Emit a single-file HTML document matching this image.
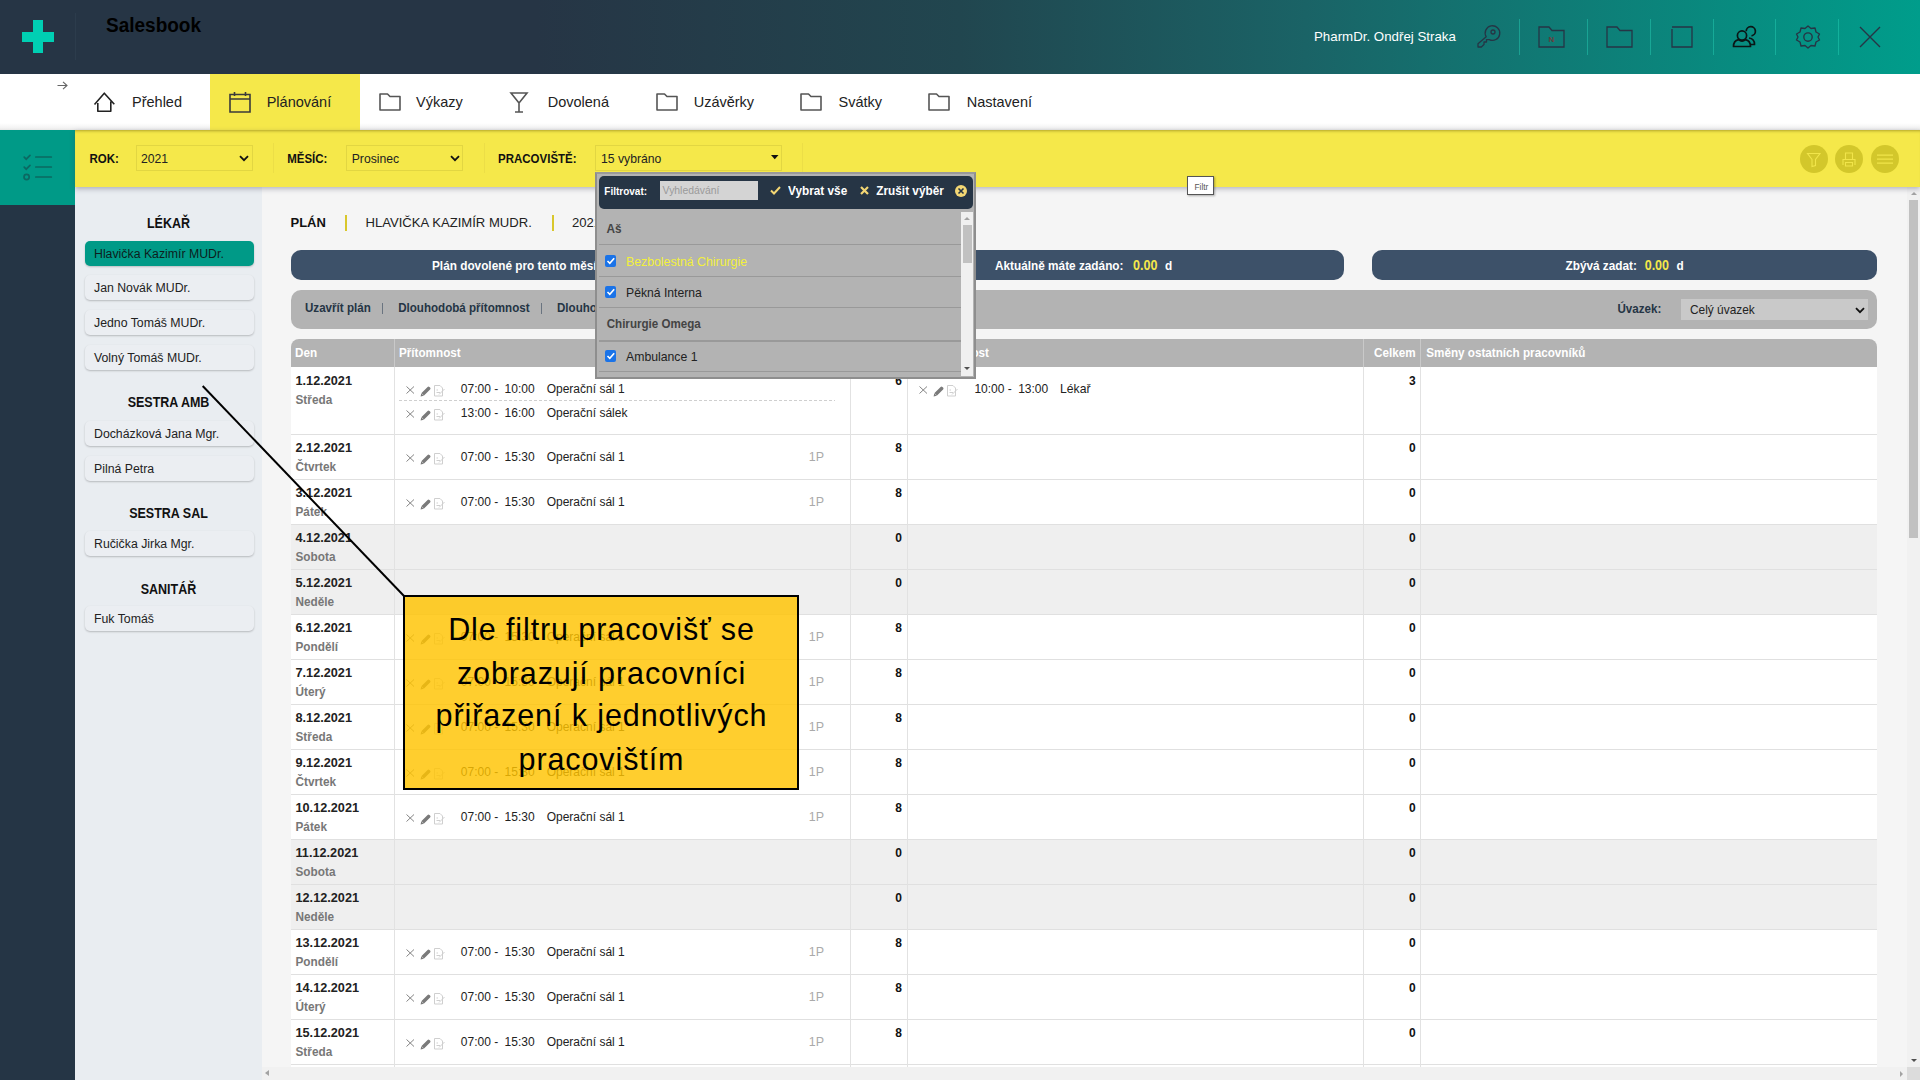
<!DOCTYPE html>
<html><head><meta charset="utf-8">
<style>
*{box-sizing:border-box;margin:0;padding:0}
html,body{width:1920px;height:1080px;overflow:hidden;font-family:"Liberation Sans",sans-serif;background:#f5f5f5;color:#222;position:relative}
.abs{position:absolute}
.t{position:absolute;white-space:pre}
svg{overflow:visible}
</style></head><body>

<div class="abs" style="left:0px;top:0px;width:1920px;height:74px;background:linear-gradient(90deg,#263545 0%,#263545 28%,#21464f 50%,#1a6366 68%,#009d8b 100%)"></div>
<div class="abs" style="left:33px;top:20px;width:10px;height:33px;background:#00cfb3"></div>
<div class="abs" style="left:21.5px;top:32px;width:32.5px;height:9.5px;background:#00cfb3"></div>
<div class="abs" style="left:75px;top:13px;width:1px;height:47px;background:#2c3c4c"></div>
<div class="t" style="left:106.00px;top:15px;font-size:19px;line-height:21px;font-weight:700;color:#000;transform:scaleY(1.1);transform-origin:0 17px">Salesbook</div>
<div class="t" style="left:1314.00px;top:29px;font-size:13.3px;line-height:15px;font-weight:400;color:#fff;">PharmDr. Ondřej Straka</div>
<div class="abs" style="left:1519.0px;top:19px;width:1.0px;height:36px;background:rgba(40,210,185,.45)"></div>
<div class="abs" style="left:1586.5px;top:19px;width:1.0px;height:36px;background:rgba(40,210,185,.45)"></div>
<div class="abs" style="left:1649.5px;top:19px;width:1.0px;height:36px;background:rgba(40,210,185,.45)"></div>
<div class="abs" style="left:1712.5px;top:19px;width:1.0px;height:36px;background:rgba(40,210,185,.45)"></div>
<div class="abs" style="left:1774.5px;top:19px;width:1.0px;height:36px;background:rgba(40,210,185,.45)"></div>
<div class="abs" style="left:1837.5px;top:19px;width:1.0px;height:36px;background:rgba(40,210,185,.45)"></div>
<svg class="abs" style="left:1477px;top:25px;" width="24" height="23" viewBox="0 0 24 23"><g fill="none" stroke="#263545" stroke-width="1.3" stroke-linejoin="round" stroke-linecap="round"><path d="M9.2 11.8 A7.3 7.3 0 1 1 12.2 14.6 L9.5 14.6 L9.5 17 L7 17 L7 19.5 L4.3 22 L1 22 L1 18.7 Z"/><circle cx="16" cy="7" r="2"/></g></svg>
<svg class="abs" style="left:1538px;top:26px;" width="27" height="22" viewBox="0 0 27 22"><g fill="none" stroke="#263545" stroke-width="1.3"><path d="M1 1 H11 L14 4.5 H26 V21 H1 Z"/></g><text x="13.5" y="16" font-family="Liberation Sans" font-size="8" font-weight="700" fill="#6a3b3b" text-anchor="middle">N</text></svg>
<svg class="abs" style="left:1606px;top:26px;" width="27" height="22" viewBox="0 0 27 22"><g fill="none" stroke="#263545" stroke-width="1.3"><path d="M1 1 H11 L14 4.5 H26 V21 H1 Z"/></g></svg>
<svg class="abs" style="left:1671px;top:26px;" width="22" height="22" viewBox="0 0 22 22"><g fill="none" stroke="#263545" stroke-width="1.3"><path d="M1 1 H21 V21 H1 V3"/></g></svg>
<svg class="abs" style="left:1732px;top:25px;" width="24" height="24" viewBox="0 0 24 24"><g fill="none" stroke="#0b1616" stroke-width="1.7" stroke-linejoin="round"><path d="M14.2 6.2 A4.6 4.6 0 1 1 19.5 10.8"/><circle cx="10" cy="10.5" r="4.6"/><path d="M1.5 21.5 C1.5 17.5 3.5 15.3 6.5 14.6 C8.5 16.2 11.5 16.2 13.5 14.6 C16.5 15.3 18.5 17.5 18.5 21.5 Z"/><path d="M17 13 C20 13.3 22.5 15.5 22.5 19.5 L19 19.5"/></g></svg>
<svg class="abs" style="left:1795px;top:25px;" width="26" height="24" viewBox="0 0 26 24"><g fill="none" stroke="#263545" stroke-width="1.35" stroke-linejoin="round"><path d="M13 1 L16 3.5 L20 3 L21 7 L24.5 9 L23 12 L24.5 15 L21 17 L20 21 L16 20.5 L13 23 L10 20.5 L6 21 L5 17 L1.5 15 L3 12 L1.5 9 L5 7 L6 3 L10 3.5 Z"/><circle cx="13" cy="12" r="4.2"/></g></svg>
<svg class="abs" style="left:1859px;top:26px;" width="22" height="22" viewBox="0 0 22 22"><g stroke="#263545" stroke-width="1.35"><path d="M1 1 L21 21 M21 1 L1 21"/></g></svg>
<div class="abs" style="left:0px;top:74px;width:1920px;height:56px;background:linear-gradient(180deg,#fff 0,#fff 49px,#f3f3f3 54px,#e6e6e6 56px)"></div>
<svg class="abs" style="left:57px;top:81px;" width="11" height="9" viewBox="0 0 11 9"><g fill="none" stroke="#666" stroke-width="1.1"><path d="M0.5 4.5 H10 M6 0.8 L10 4.5 L6 8.2"/></g></svg>
<div class="abs" style="left:210px;top:74px;width:150px;height:56px;background:#f5e84a"></div>
<svg class="abs" style="left:94px;top:92px;" width="21" height="21" viewBox="0 0 21 21"><g fill="none" stroke="#222" stroke-width="1.6" stroke-linejoin="round"><path d="M0.5 12.5 L10.3 1.2 L20.3 12.3 M3.8 11 V19.3 H16.8 V9.5"/></g></svg>
<div class="t" style="left:132.00px;top:94px;font-size:14.5px;line-height:16px;font-weight:400;color:#222;">Přehled</div>
<svg class="abs" style="left:229px;top:91px;" width="22" height="22" viewBox="0 0 22 22"><g fill="none" stroke="#3a3a3a" stroke-width="1.6"><path d="M1 3.5 H21 V21 H1 Z M1 8 H21 M5.5 1 V5 M16.5 1 V5"/></g></svg>
<div class="t" style="left:266.70px;top:94px;font-size:14.5px;line-height:16px;font-weight:400;color:#222;">Plánování</div>
<svg class="abs" style="left:378.5px;top:93px;" width="22" height="18" viewBox="0 0 22 18"><g fill="none" stroke="#555" stroke-width="1.6" stroke-linejoin="round"><path d="M1 1 H8.5 L11 3.5 H21 V17 H1 Z"/></g></svg>
<div class="t" style="left:416.00px;top:94px;font-size:14.5px;line-height:16px;font-weight:400;color:#222;">Výkazy</div>
<svg class="abs" style="left:510px;top:92px;" width="18" height="21" viewBox="0 0 18 21"><g fill="none" stroke="#555" stroke-width="1.6"><path d="M1 1 H17 L9 11 Z M9 11 V20 M5 20 H13"/></g></svg>
<div class="t" style="left:547.70px;top:94px;font-size:14.5px;line-height:16px;font-weight:400;color:#222;">Dovolená</div>
<svg class="abs" style="left:655.5px;top:93px;" width="22" height="18" viewBox="0 0 22 18"><g fill="none" stroke="#555" stroke-width="1.6" stroke-linejoin="round"><path d="M1 1 H8.5 L11 3.5 H21 V17 H1 Z"/></g></svg>
<div class="t" style="left:693.70px;top:94px;font-size:14.5px;line-height:16px;font-weight:400;color:#222;">Uzávěrky</div>
<svg class="abs" style="left:799.5px;top:93px;" width="22" height="18" viewBox="0 0 22 18"><g fill="none" stroke="#555" stroke-width="1.6" stroke-linejoin="round"><path d="M1 1 H8.5 L11 3.5 H21 V17 H1 Z"/></g></svg>
<div class="t" style="left:838.50px;top:94px;font-size:14.5px;line-height:16px;font-weight:400;color:#222;">Svátky</div>
<svg class="abs" style="left:927.5px;top:93px;" width="22" height="18" viewBox="0 0 22 18"><g fill="none" stroke="#555" stroke-width="1.6" stroke-linejoin="round"><path d="M1 1 H8.5 L11 3.5 H21 V17 H1 Z"/></g></svg>
<div class="t" style="left:966.70px;top:94px;font-size:14.5px;line-height:16px;font-weight:400;color:#222;">Nastavení</div>
<div class="abs" style="left:0px;top:130px;width:75px;height:950px;background:#253545"></div>
<div class="abs" style="left:0px;top:130px;width:75px;height:75px;background:#009a87"></div>
<svg class="abs" style="left:20px;top:150px;" width="36" height="32" viewBox="0 0 36 32"><g fill="none" stroke="#0b6962" stroke-width="1.7" stroke-linecap="round"><path d="M4.2 7.2 L6.2 9.2 L10 5.3 M4.2 17.2 L6.2 19.2 L10 15.3 M15.8 7 H31.3 M15.8 17 H31.3 M15.8 27 H31.3"/><circle cx="6.6" cy="27" r="2.6"/></g></svg>
<div class="abs" style="left:75px;top:187px;width:187px;height:893px;background:#e9edf1"></div>
<div class="t" style="left:-131.50px;width:600px;text-align:center;top:217px;font-size:12.5px;line-height:14px;font-weight:700;color:#111;transform:scaleY(1.12);transform-origin:0 11px;">LÉKAŘ</div>
<div class="abs" style="left:85px;top:241px;width:168.5px;height:25px;background:#009a87;border-radius:5px;box-shadow:0 1px 2px rgba(0,0,0,.2)"></div>
<div class="t" style="left:94.00px;top:247px;font-size:12.3px;line-height:14px;font-weight:400;color:#0d1d1d;">Hlavička Kazimír MUDr.</div>
<div class="abs" style="left:85px;top:275px;width:168.5px;height:25px;background:#ebeef2;border-radius:5px;box-shadow:0 1px 2px rgba(0,0,0,.22)"></div>
<div class="t" style="left:94.00px;top:281px;font-size:12.3px;line-height:14px;font-weight:400;color:#222;">Jan Novák MUDr.</div>
<div class="abs" style="left:85px;top:310px;width:168.5px;height:25px;background:#ebeef2;border-radius:5px;box-shadow:0 1px 2px rgba(0,0,0,.22)"></div>
<div class="t" style="left:94.00px;top:316px;font-size:12.3px;line-height:14px;font-weight:400;color:#222;">Jedno Tomáš MUDr.</div>
<div class="abs" style="left:85px;top:345px;width:168.5px;height:25px;background:#ebeef2;border-radius:5px;box-shadow:0 1px 2px rgba(0,0,0,.22)"></div>
<div class="t" style="left:94.00px;top:351px;font-size:12.3px;line-height:14px;font-weight:400;color:#222;">Volný Tomáš MUDr.</div>
<div class="t" style="left:-131.50px;width:600px;text-align:center;top:396px;font-size:12.5px;line-height:14px;font-weight:700;color:#111;transform:scaleY(1.12);transform-origin:0 11px;">SESTRA AMB</div>
<div class="abs" style="left:85px;top:421px;width:168.5px;height:25px;background:#ebeef2;border-radius:5px;box-shadow:0 1px 2px rgba(0,0,0,.22)"></div>
<div class="t" style="left:94.00px;top:427px;font-size:12.3px;line-height:14px;font-weight:400;color:#222;">Docházková Jana Mgr.</div>
<div class="abs" style="left:85px;top:456px;width:168.5px;height:25px;background:#ebeef2;border-radius:5px;box-shadow:0 1px 2px rgba(0,0,0,.22)"></div>
<div class="t" style="left:94.00px;top:462px;font-size:12.3px;line-height:14px;font-weight:400;color:#222;">Pilná Petra</div>
<div class="t" style="left:-131.50px;width:600px;text-align:center;top:507px;font-size:12.5px;line-height:14px;font-weight:700;color:#111;transform:scaleY(1.12);transform-origin:0 11px;">SESTRA SAL</div>
<div class="abs" style="left:85px;top:531px;width:168.5px;height:25px;background:#ebeef2;border-radius:5px;box-shadow:0 1px 2px rgba(0,0,0,.22)"></div>
<div class="t" style="left:94.00px;top:537px;font-size:12.3px;line-height:14px;font-weight:400;color:#222;">Ručička Jirka Mgr.</div>
<div class="t" style="left:-131.50px;width:600px;text-align:center;top:583px;font-size:12.5px;line-height:14px;font-weight:700;color:#111;transform:scaleY(1.12);transform-origin:0 11px;">SANITÁŘ</div>
<div class="abs" style="left:85px;top:606px;width:168.5px;height:25px;background:#ebeef2;border-radius:5px;box-shadow:0 1px 2px rgba(0,0,0,.22)"></div>
<div class="t" style="left:94.00px;top:612px;font-size:12.3px;line-height:14px;font-weight:400;color:#222;">Fuk Tomáš</div>
<div class="abs" style="left:1907px;top:187px;width:13px;height:880px;background:#f1f1f1"></div>
<div class="abs" style="left:1907px;top:1067px;width:13px;height:13px;background:#dcdcdc"></div>
<div class="abs" style="left:1908.5px;top:199.5px;width:9.5px;height:338.5px;background:#c1c1c1"></div>
<div class="abs" style="left:1910.5px;top:192px;width:0;height:0;border-left:3px solid transparent;border-right:3px solid transparent;border-bottom:3px solid #a3a3a3"></div>
<div class="abs" style="left:1910.5px;top:1058.5px;width:0;height:0;border-left:3px solid transparent;border-right:3px solid transparent;border-top:3.5px solid #505050"></div>
<div class="abs" style="left:75px;top:130px;width:1845px;height:57px;background:#f5e84a;box-shadow:0 2px 5px rgba(60,60,90,.35), inset 0 3px 3px -2px rgba(90,80,0,.45)"></div>
<div class="t" style="left:89.50px;top:153px;font-size:11.5px;line-height:12px;font-weight:700;color:#111;transform:scaleY(1.12);transform-origin:0 10px;">ROK:</div>
<div class="abs" style="left:136px;top:145px;width:116.5px;height:25.5px;background:transparent;border:1px solid rgba(160,150,40,.22)"></div>
<div class="t" style="left:141.00px;top:152px;font-size:12.2px;line-height:14px;font-weight:400;color:#222;">2021</div>
<svg class="abs" style="left:239.0px;top:154.75px;" width="10" height="7" viewBox="0 0 10 7"><path d="M1 1.2 L5 5.2 L9 1.2" fill="none" stroke="#111" stroke-width="1.8"/></svg>
<div class="abs" style="left:272.5px;top:143px;width:1.0px;height:30px;background:rgba(170,160,50,.12)"></div>
<div class="t" style="left:287.20px;top:153px;font-size:11.5px;line-height:12px;font-weight:700;color:#111;transform:scaleY(1.12);transform-origin:0 10px;">MĚSÍC:</div>
<div class="abs" style="left:346.3px;top:145px;width:117.0px;height:25.5px;background:transparent;border:1px solid rgba(160,150,40,.22)"></div>
<div class="t" style="left:351.70px;top:152px;font-size:12.2px;line-height:14px;font-weight:400;color:#222;">Prosinec</div>
<svg class="abs" style="left:449.8px;top:154.75px;" width="10" height="7" viewBox="0 0 10 7"><path d="M1 1.2 L5 5.2 L9 1.2" fill="none" stroke="#111" stroke-width="1.8"/></svg>
<div class="abs" style="left:483.5px;top:143px;width:1.0px;height:30px;background:rgba(170,160,50,.12)"></div>
<div class="t" style="left:498.00px;top:153px;font-size:11.5px;line-height:12px;font-weight:700;color:#111;transform:scaleY(1.12);transform-origin:0 10px;">PRACOVIŠTĚ:</div>
<div class="abs" style="left:595.4px;top:145.4px;width:186.30000000000007px;height:26.099999999999994px;background:transparent;border:1px solid rgba(160,150,40,.22)"></div>
<div class="t" style="left:601.00px;top:152px;font-size:12.2px;line-height:14px;font-weight:400;color:#222;">15 vybráno</div>
<svg class="abs" style="left:770.5px;top:155.3px;" width="8" height="5" viewBox="0 0 8 5"><path d="M0 0 H7.5 L3.75 4.2 Z" fill="#111"/></svg>
<div class="abs" style="left:802px;top:143px;width:1px;height:30px;background:rgba(170,160,50,.12)"></div>
<div class="abs" style="left:1799.7px;top:145px;width:28px;height:28px;border-radius:50%;background:#d3c72b"></div>
<div class="abs" style="left:1834.5px;top:145px;width:28px;height:28px;border-radius:50%;background:#d3c72b"></div>
<div class="abs" style="left:1870.9px;top:145px;width:28px;height:28px;border-radius:50%;background:#d3c72b"></div>
<svg class="abs" style="left:1806.7px;top:153px;" width="14" height="14" viewBox="0 0 14 14"><path d="M0.5 0.5 H13 L8.5 6.5 V12.5 L5 13.5 V6.5 Z" fill="none" stroke="#f1e54a" stroke-width="1.1"/></svg>
<svg class="abs" style="left:1841.5px;top:152px;" width="14" height="14" viewBox="0 0 14 14"><g fill="none" stroke="#f1e54a" stroke-width="1.1"><path d="M3.5 7 V1 H10.5 V7 M1 13 V7.5 H13 V13 M3.5 10.5 H10.5 V14 H3.5 Z"/></g></svg>
<svg class="abs" style="left:1876.9px;top:154px;" width="16" height="10" viewBox="0 0 16 10"><g stroke="#f1e54a" stroke-width="1.3"><path d="M0 1.2 H16 M0 5.2 H16 M0 9.2 H16"/></g></svg>
<div class="t" style="left:290.50px;top:215px;font-size:13px;line-height:15px;font-weight:700;color:#111;">PLÁN</div>
<div class="abs" style="left:345.2px;top:215px;width:1.6000000000000227px;height:15.5px;background:#d9c72c"></div>
<div class="t" style="left:365.50px;top:215px;font-size:13.1px;line-height:15px;font-weight:400;color:#222;">HLAVIČKA KAZIMÍR MUDR.</div>
<div class="abs" style="left:552.2px;top:215px;width:1.599999999999909px;height:15.5px;background:#d9c72c"></div>
<div class="t" style="left:572.00px;top:215px;font-size:13.1px;line-height:15px;font-weight:400;color:#222;">2021 - PROSINEC</div>
<div class="abs" style="left:291px;top:250px;width:520px;height:30px;background:#3d5169;border-radius:10px"></div>
<div class="abs" style="left:839px;top:250px;width:505px;height:30px;background:#3d5169;border-radius:10px"></div>
<div class="abs" style="left:1372px;top:250px;width:505px;height:30px;background:#3d5169;border-radius:10px"></div>
<div class="t" style="left:432.00px;top:259px;font-size:11.8px;line-height:14px;font-weight:700;color:#fff;transform:scaleY(1.12);transform-origin:0 11px;">Plán dovolené pro tento měsíc:</div>
<div class="t" style="left:995.00px;top:259px;font-size:11.8px;line-height:14px;font-weight:700;color:#fff;transform:scaleY(1.12);transform-origin:0 11px;">Aktuálně máte zadáno:</div>
<div class="t" style="left:1133.00px;top:259px;font-size:12.5px;line-height:14px;font-weight:700;color:#f5e84a;transform:scaleY(1.12);transform-origin:0 11px;">0.00</div>
<div class="t" style="left:1165.00px;top:259px;font-size:11.8px;line-height:14px;font-weight:700;color:#fff;transform:scaleY(1.12);transform-origin:0 11px;">d</div>
<div class="t" style="left:1565.50px;top:259px;font-size:11.8px;line-height:14px;font-weight:700;color:#fff;transform:scaleY(1.12);transform-origin:0 11px;">Zbývá zadat:</div>
<div class="t" style="left:1644.70px;top:259px;font-size:12.5px;line-height:14px;font-weight:700;color:#f5e84a;transform:scaleY(1.12);transform-origin:0 11px;">0.00</div>
<div class="t" style="left:1676.50px;top:259px;font-size:11.8px;line-height:14px;font-weight:700;color:#fff;transform:scaleY(1.12);transform-origin:0 11px;">d</div>
<div class="abs" style="left:291px;top:290px;width:1586px;height:39px;background:#b3b3b3;border-radius:10px"></div>
<div class="t" style="left:305.00px;top:302px;font-size:11.6px;line-height:12px;font-weight:700;color:#253545;transform:scaleY(1.12);transform-origin:0 10px;">Uzavřít plán</div>
<div class="abs" style="left:382px;top:303px;width:1px;height:11px;background:#6a7480"></div>
<div class="t" style="left:398.20px;top:302px;font-size:11.6px;line-height:12px;font-weight:700;color:#253545;transform:scaleY(1.12);transform-origin:0 10px;">Dlouhodobá přítomnost</div>
<div class="abs" style="left:541px;top:303px;width:1px;height:11px;background:#6a7480"></div>
<div class="t" style="left:557.00px;top:302px;font-size:11.6px;line-height:12px;font-weight:700;color:#253545;transform:scaleY(1.12);transform-origin:0 10px;">Dlouhodobá nepřítomnost</div>
<div class="t" style="left:1617.50px;top:303px;font-size:11.6px;line-height:12px;font-weight:700;color:#253545;transform:scaleY(1.12);transform-origin:0 10px;">Úvazek:</div>
<div class="abs" style="left:1681px;top:299px;width:187px;height:21px;background:#c9c9c9"></div>
<div class="t" style="left:1690.00px;top:303px;font-size:11.9px;line-height:14px;font-weight:400;color:#222;">Celý úvazek</div>
<svg class="abs" style="left:1854.5px;top:306.5px;" width="10" height="7" viewBox="0 0 10 7"><path d="M1 1.2 L5 5.2 L9 1.2" fill="none" stroke="#111" stroke-width="1.8"/></svg>
<div class="abs" style="left:291px;top:339px;width:1586px;height:28px;background:#b3b3b3;border-radius:8px 8px 0 0"></div>
<div class="abs" style="left:393.5px;top:339px;width:1.0px;height:28px;background:#c9c9c9"></div>
<div class="abs" style="left:850.0px;top:339px;width:1.0px;height:28px;background:#c9c9c9"></div>
<div class="abs" style="left:907.0px;top:339px;width:1.0px;height:28px;background:#c9c9c9"></div>
<div class="abs" style="left:1363.0px;top:339px;width:1.0px;height:28px;background:#c9c9c9"></div>
<div class="abs" style="left:1419.8px;top:339px;width:1.0px;height:28px;background:#c9c9c9"></div>
<div class="t" style="left:295.00px;top:346px;font-size:11.7px;line-height:13px;font-weight:700;color:#fff;transform:scaleY(1.12);transform-origin:0 11px;">Den</div>
<div class="t" style="left:399.00px;top:346px;font-size:11.7px;line-height:13px;font-weight:700;color:#fff;transform:scaleY(1.12);transform-origin:0 11px;">Přítomnost</div>
<div class="t" style="left:913.00px;top:346px;font-size:11.7px;line-height:13px;font-weight:700;color:#fff;transform:scaleY(1.12);transform-origin:0 11px;">Nepřítomnost</div>
<div class="t" style="right:504.40px;text-align:right;top:346px;font-size:11.7px;line-height:13px;font-weight:700;color:#fff;transform:scaleY(1.12);transform-origin:0 11px;">Celkem</div>
<div class="t" style="left:1426.20px;top:346px;font-size:11.7px;line-height:13px;font-weight:700;color:#fff;transform:scaleY(1.12);transform-origin:0 11px;">Směny ostatních pracovníků</div>
<div class="abs" style="left:291px;top:367px;width:1586px;height:67px;background:#fff"></div>
<div class="abs" style="left:393.5px;top:367px;width:1.0px;height:67px;background:#e2e2e2"></div>
<div class="abs" style="left:850.0px;top:367px;width:1.0px;height:67px;background:#e2e2e2"></div>
<div class="abs" style="left:907.0px;top:367px;width:1.0px;height:67px;background:#e2e2e2"></div>
<div class="abs" style="left:1363.0px;top:367px;width:1.0px;height:67px;background:#e2e2e2"></div>
<div class="abs" style="left:1419.8px;top:367px;width:1.0px;height:67px;background:#e2e2e2"></div>
<div class="t" style="left:295.50px;top:374px;font-size:12.7px;line-height:14px;font-weight:700;color:#222;">1.12.2021</div>
<div class="t" style="left:295.50px;top:393px;font-size:11.8px;line-height:14px;font-weight:700;color:#777;transform:scaleY(1.12);transform-origin:0 11px;">Středa</div>
<div class="abs" style="left:399px;top:400px;width:436px;height:0;border-top:1px dashed #d0d0d0;border:none;height:1px;background:repeating-linear-gradient(90deg,#cfcfcf 0 3px,transparent 3px 5px)"></div>
<svg class="abs" style="left:405.5px;top:386px;" width="8.5" height="8" viewBox="0 0 8.5 8"><path d="M0.5 0.5 L8 7.5 M8 0.5 L0.5 7.5" stroke="#858585" stroke-width="1"/></svg>
<svg class="abs" style="left:419.5px;top:385.5px;" width="11" height="11" viewBox="0 0 11 11"><path d="M0.6 10.4 L1.3 7.2 L7.6 0.9 Q8.5 0 9.4 0.9 L10.1 1.6 Q11 2.5 10.1 3.4 L3.8 9.7 Z" fill="#7a7a7a"/><path d="M1.3 7.2 L3.8 9.7" stroke="#fff" stroke-width=".5"/></svg>
<svg class="abs" style="left:434.2px;top:384.7px;" width="12" height="12" viewBox="0 0 12 12"><g fill="none" stroke="#cfcfcf" stroke-width="1"><path d="M0.5 0.5 H6 L8.5 3 V11 H0.5 Z"/><path d="M2.5 5 H4 M2.5 7.5 H6 M5 9.5 L10.5 4" /></g></svg>
<div class="t" style="left:460.80px;top:382px;font-size:12px;line-height:14px;font-weight:400;color:#222;">07:00 -</div>
<div class="t" style="left:504.60px;top:382px;font-size:12px;line-height:14px;font-weight:400;color:#222;">10:00</div>
<div class="t" style="left:546.70px;top:382px;font-size:12px;line-height:14px;font-weight:400;color:#222;">Operační sál 1</div>
<svg class="abs" style="left:405.5px;top:410px;" width="8.5" height="8" viewBox="0 0 8.5 8"><path d="M0.5 0.5 L8 7.5 M8 0.5 L0.5 7.5" stroke="#858585" stroke-width="1"/></svg>
<svg class="abs" style="left:419.5px;top:409.5px;" width="11" height="11" viewBox="0 0 11 11"><path d="M0.6 10.4 L1.3 7.2 L7.6 0.9 Q8.5 0 9.4 0.9 L10.1 1.6 Q11 2.5 10.1 3.4 L3.8 9.7 Z" fill="#7a7a7a"/><path d="M1.3 7.2 L3.8 9.7" stroke="#fff" stroke-width=".5"/></svg>
<svg class="abs" style="left:434.2px;top:408.7px;" width="12" height="12" viewBox="0 0 12 12"><g fill="none" stroke="#cfcfcf" stroke-width="1"><path d="M0.5 0.5 H6 L8.5 3 V11 H0.5 Z"/><path d="M2.5 5 H4 M2.5 7.5 H6 M5 9.5 L10.5 4" /></g></svg>
<div class="t" style="left:460.80px;top:406px;font-size:12px;line-height:14px;font-weight:400;color:#222;">13:00 -</div>
<div class="t" style="left:504.60px;top:406px;font-size:12px;line-height:14px;font-weight:400;color:#222;">16:00</div>
<div class="t" style="left:546.70px;top:406px;font-size:12px;line-height:14px;font-weight:400;color:#222;">Operační sálek</div>
<div class="t" style="right:1018.00px;text-align:right;top:374px;font-size:12px;line-height:14px;font-weight:700;color:#111;transform:scaleY(1.12);transform-origin:0 11px;">6</div>
<svg class="abs" style="left:918.5px;top:386px;" width="8.5" height="8" viewBox="0 0 8.5 8"><path d="M0.5 0.5 L8 7.5 M8 0.5 L0.5 7.5" stroke="#858585" stroke-width="1"/></svg>
<svg class="abs" style="left:932.5px;top:385.5px;" width="11" height="11" viewBox="0 0 11 11"><path d="M0.6 10.4 L1.3 7.2 L7.6 0.9 Q8.5 0 9.4 0.9 L10.1 1.6 Q11 2.5 10.1 3.4 L3.8 9.7 Z" fill="#7a7a7a"/><path d="M1.3 7.2 L3.8 9.7" stroke="#fff" stroke-width=".5"/></svg>
<svg class="abs" style="left:947.2px;top:384.7px;" width="12" height="12" viewBox="0 0 12 12"><g fill="none" stroke="#cfcfcf" stroke-width="1"><path d="M0.5 0.5 H6 L8.5 3 V11 H0.5 Z"/><path d="M2.5 5 H4 M2.5 7.5 H6 M5 9.5 L10.5 4" /></g></svg>
<div class="t" style="left:974.40px;top:382px;font-size:12px;line-height:14px;font-weight:400;color:#222;">10:00 -</div>
<div class="t" style="left:1018.20px;top:382px;font-size:12px;line-height:14px;font-weight:400;color:#222;">13:00</div>
<div class="t" style="left:1060.00px;top:382px;font-size:12.2px;line-height:14px;font-weight:400;color:#222;">Lékař</div>
<div class="t" style="right:504.40px;text-align:right;top:374px;font-size:12px;line-height:14px;font-weight:700;color:#111;transform:scaleY(1.12);transform-origin:0 11px;">3</div>
<div class="abs" style="left:291px;top:434px;width:1586px;height:45px;background:#fff"></div>
<div class="abs" style="left:291px;top:434px;width:1586px;height:1px;background:#e0e0e0"></div>
<div class="abs" style="left:393.5px;top:434px;width:1.0px;height:45px;background:#e2e2e2"></div>
<div class="abs" style="left:850.0px;top:434px;width:1.0px;height:45px;background:#e2e2e2"></div>
<div class="abs" style="left:907.0px;top:434px;width:1.0px;height:45px;background:#e2e2e2"></div>
<div class="abs" style="left:1363.0px;top:434px;width:1.0px;height:45px;background:#e2e2e2"></div>
<div class="abs" style="left:1419.8px;top:434px;width:1.0px;height:45px;background:#e2e2e2"></div>
<div class="t" style="left:295.50px;top:441px;font-size:12.7px;line-height:14px;font-weight:700;color:#222;">2.12.2021</div>
<div class="t" style="left:295.50px;top:460px;font-size:11.8px;line-height:14px;font-weight:700;color:#777;transform:scaleY(1.12);transform-origin:0 11px;">Čtvrtek</div>
<svg class="abs" style="left:405.5px;top:454px;" width="8.5" height="8" viewBox="0 0 8.5 8"><path d="M0.5 0.5 L8 7.5 M8 0.5 L0.5 7.5" stroke="#858585" stroke-width="1"/></svg>
<svg class="abs" style="left:419.5px;top:453.5px;" width="11" height="11" viewBox="0 0 11 11"><path d="M0.6 10.4 L1.3 7.2 L7.6 0.9 Q8.5 0 9.4 0.9 L10.1 1.6 Q11 2.5 10.1 3.4 L3.8 9.7 Z" fill="#7a7a7a"/><path d="M1.3 7.2 L3.8 9.7" stroke="#fff" stroke-width=".5"/></svg>
<svg class="abs" style="left:434.2px;top:452.7px;" width="12" height="12" viewBox="0 0 12 12"><g fill="none" stroke="#cfcfcf" stroke-width="1"><path d="M0.5 0.5 H6 L8.5 3 V11 H0.5 Z"/><path d="M2.5 5 H4 M2.5 7.5 H6 M5 9.5 L10.5 4" /></g></svg>
<div class="t" style="left:460.80px;top:450px;font-size:12px;line-height:14px;font-weight:400;color:#222;">07:00 -</div>
<div class="t" style="left:504.60px;top:450px;font-size:12px;line-height:14px;font-weight:400;color:#222;">15:30</div>
<div class="t" style="left:546.70px;top:450px;font-size:12px;line-height:14px;font-weight:400;color:#222;">Operační sál 1</div>
<div class="t" style="left:808.70px;top:450px;font-size:12.5px;line-height:14px;font-weight:400;color:#aaa;">1P</div>
<div class="t" style="right:1018.00px;text-align:right;top:441px;font-size:12px;line-height:14px;font-weight:700;color:#111;transform:scaleY(1.12);transform-origin:0 11px;">8</div>
<div class="t" style="right:504.40px;text-align:right;top:441px;font-size:12px;line-height:14px;font-weight:700;color:#111;transform:scaleY(1.12);transform-origin:0 11px;">0</div>
<div class="abs" style="left:291px;top:479px;width:1586px;height:45px;background:#fff"></div>
<div class="abs" style="left:291px;top:479px;width:1586px;height:1px;background:#e0e0e0"></div>
<div class="abs" style="left:393.5px;top:479px;width:1.0px;height:45px;background:#e2e2e2"></div>
<div class="abs" style="left:850.0px;top:479px;width:1.0px;height:45px;background:#e2e2e2"></div>
<div class="abs" style="left:907.0px;top:479px;width:1.0px;height:45px;background:#e2e2e2"></div>
<div class="abs" style="left:1363.0px;top:479px;width:1.0px;height:45px;background:#e2e2e2"></div>
<div class="abs" style="left:1419.8px;top:479px;width:1.0px;height:45px;background:#e2e2e2"></div>
<div class="t" style="left:295.50px;top:486px;font-size:12.7px;line-height:14px;font-weight:700;color:#222;">3.12.2021</div>
<div class="t" style="left:295.50px;top:505px;font-size:11.8px;line-height:14px;font-weight:700;color:#777;transform:scaleY(1.12);transform-origin:0 11px;">Pátek</div>
<svg class="abs" style="left:405.5px;top:499px;" width="8.5" height="8" viewBox="0 0 8.5 8"><path d="M0.5 0.5 L8 7.5 M8 0.5 L0.5 7.5" stroke="#858585" stroke-width="1"/></svg>
<svg class="abs" style="left:419.5px;top:498.5px;" width="11" height="11" viewBox="0 0 11 11"><path d="M0.6 10.4 L1.3 7.2 L7.6 0.9 Q8.5 0 9.4 0.9 L10.1 1.6 Q11 2.5 10.1 3.4 L3.8 9.7 Z" fill="#7a7a7a"/><path d="M1.3 7.2 L3.8 9.7" stroke="#fff" stroke-width=".5"/></svg>
<svg class="abs" style="left:434.2px;top:497.7px;" width="12" height="12" viewBox="0 0 12 12"><g fill="none" stroke="#cfcfcf" stroke-width="1"><path d="M0.5 0.5 H6 L8.5 3 V11 H0.5 Z"/><path d="M2.5 5 H4 M2.5 7.5 H6 M5 9.5 L10.5 4" /></g></svg>
<div class="t" style="left:460.80px;top:495px;font-size:12px;line-height:14px;font-weight:400;color:#222;">07:00 -</div>
<div class="t" style="left:504.60px;top:495px;font-size:12px;line-height:14px;font-weight:400;color:#222;">15:30</div>
<div class="t" style="left:546.70px;top:495px;font-size:12px;line-height:14px;font-weight:400;color:#222;">Operační sál 1</div>
<div class="t" style="left:808.70px;top:495px;font-size:12.5px;line-height:14px;font-weight:400;color:#aaa;">1P</div>
<div class="t" style="right:1018.00px;text-align:right;top:486px;font-size:12px;line-height:14px;font-weight:700;color:#111;transform:scaleY(1.12);transform-origin:0 11px;">8</div>
<div class="t" style="right:504.40px;text-align:right;top:486px;font-size:12px;line-height:14px;font-weight:700;color:#111;transform:scaleY(1.12);transform-origin:0 11px;">0</div>
<div class="abs" style="left:291px;top:524px;width:1586px;height:45px;background:#efefef"></div>
<div class="abs" style="left:291px;top:524px;width:1586px;height:1px;background:#e0e0e0"></div>
<div class="abs" style="left:393.5px;top:524px;width:1.0px;height:45px;background:#e2e2e2"></div>
<div class="abs" style="left:850.0px;top:524px;width:1.0px;height:45px;background:#e2e2e2"></div>
<div class="abs" style="left:907.0px;top:524px;width:1.0px;height:45px;background:#e2e2e2"></div>
<div class="abs" style="left:1363.0px;top:524px;width:1.0px;height:45px;background:#e2e2e2"></div>
<div class="abs" style="left:1419.8px;top:524px;width:1.0px;height:45px;background:#e2e2e2"></div>
<div class="t" style="left:295.50px;top:531px;font-size:12.7px;line-height:14px;font-weight:700;color:#222;">4.12.2021</div>
<div class="t" style="left:295.50px;top:550px;font-size:11.8px;line-height:14px;font-weight:700;color:#777;transform:scaleY(1.12);transform-origin:0 11px;">Sobota</div>
<div class="t" style="right:1018.00px;text-align:right;top:531px;font-size:12px;line-height:14px;font-weight:700;color:#111;transform:scaleY(1.12);transform-origin:0 11px;">0</div>
<div class="t" style="right:504.40px;text-align:right;top:531px;font-size:12px;line-height:14px;font-weight:700;color:#111;transform:scaleY(1.12);transform-origin:0 11px;">0</div>
<div class="abs" style="left:291px;top:569px;width:1586px;height:45px;background:#efefef"></div>
<div class="abs" style="left:291px;top:569px;width:1586px;height:1px;background:#e0e0e0"></div>
<div class="abs" style="left:393.5px;top:569px;width:1.0px;height:45px;background:#e2e2e2"></div>
<div class="abs" style="left:850.0px;top:569px;width:1.0px;height:45px;background:#e2e2e2"></div>
<div class="abs" style="left:907.0px;top:569px;width:1.0px;height:45px;background:#e2e2e2"></div>
<div class="abs" style="left:1363.0px;top:569px;width:1.0px;height:45px;background:#e2e2e2"></div>
<div class="abs" style="left:1419.8px;top:569px;width:1.0px;height:45px;background:#e2e2e2"></div>
<div class="t" style="left:295.50px;top:576px;font-size:12.7px;line-height:14px;font-weight:700;color:#222;">5.12.2021</div>
<div class="t" style="left:295.50px;top:595px;font-size:11.8px;line-height:14px;font-weight:700;color:#777;transform:scaleY(1.12);transform-origin:0 11px;">Neděle</div>
<div class="t" style="right:1018.00px;text-align:right;top:576px;font-size:12px;line-height:14px;font-weight:700;color:#111;transform:scaleY(1.12);transform-origin:0 11px;">0</div>
<div class="t" style="right:504.40px;text-align:right;top:576px;font-size:12px;line-height:14px;font-weight:700;color:#111;transform:scaleY(1.12);transform-origin:0 11px;">0</div>
<div class="abs" style="left:291px;top:614px;width:1586px;height:45px;background:#fff"></div>
<div class="abs" style="left:291px;top:614px;width:1586px;height:1px;background:#e0e0e0"></div>
<div class="abs" style="left:393.5px;top:614px;width:1.0px;height:45px;background:#e2e2e2"></div>
<div class="abs" style="left:850.0px;top:614px;width:1.0px;height:45px;background:#e2e2e2"></div>
<div class="abs" style="left:907.0px;top:614px;width:1.0px;height:45px;background:#e2e2e2"></div>
<div class="abs" style="left:1363.0px;top:614px;width:1.0px;height:45px;background:#e2e2e2"></div>
<div class="abs" style="left:1419.8px;top:614px;width:1.0px;height:45px;background:#e2e2e2"></div>
<div class="t" style="left:295.50px;top:621px;font-size:12.7px;line-height:14px;font-weight:700;color:#222;">6.12.2021</div>
<div class="t" style="left:295.50px;top:640px;font-size:11.8px;line-height:14px;font-weight:700;color:#777;transform:scaleY(1.12);transform-origin:0 11px;">Pondělí</div>
<svg class="abs" style="left:405.5px;top:634px;" width="8.5" height="8" viewBox="0 0 8.5 8"><path d="M0.5 0.5 L8 7.5 M8 0.5 L0.5 7.5" stroke="#858585" stroke-width="1"/></svg>
<svg class="abs" style="left:419.5px;top:633.5px;" width="11" height="11" viewBox="0 0 11 11"><path d="M0.6 10.4 L1.3 7.2 L7.6 0.9 Q8.5 0 9.4 0.9 L10.1 1.6 Q11 2.5 10.1 3.4 L3.8 9.7 Z" fill="#7a7a7a"/><path d="M1.3 7.2 L3.8 9.7" stroke="#fff" stroke-width=".5"/></svg>
<svg class="abs" style="left:434.2px;top:632.7px;" width="12" height="12" viewBox="0 0 12 12"><g fill="none" stroke="#cfcfcf" stroke-width="1"><path d="M0.5 0.5 H6 L8.5 3 V11 H0.5 Z"/><path d="M2.5 5 H4 M2.5 7.5 H6 M5 9.5 L10.5 4" /></g></svg>
<div class="t" style="left:460.80px;top:630px;font-size:12px;line-height:14px;font-weight:400;color:#222;">07:00 -</div>
<div class="t" style="left:504.60px;top:630px;font-size:12px;line-height:14px;font-weight:400;color:#222;">15:30</div>
<div class="t" style="left:546.70px;top:630px;font-size:12px;line-height:14px;font-weight:400;color:#222;">Operační sál 1</div>
<div class="t" style="left:808.70px;top:630px;font-size:12.5px;line-height:14px;font-weight:400;color:#aaa;">1P</div>
<div class="t" style="right:1018.00px;text-align:right;top:621px;font-size:12px;line-height:14px;font-weight:700;color:#111;transform:scaleY(1.12);transform-origin:0 11px;">8</div>
<div class="t" style="right:504.40px;text-align:right;top:621px;font-size:12px;line-height:14px;font-weight:700;color:#111;transform:scaleY(1.12);transform-origin:0 11px;">0</div>
<div class="abs" style="left:291px;top:659px;width:1586px;height:45px;background:#fff"></div>
<div class="abs" style="left:291px;top:659px;width:1586px;height:1px;background:#e0e0e0"></div>
<div class="abs" style="left:393.5px;top:659px;width:1.0px;height:45px;background:#e2e2e2"></div>
<div class="abs" style="left:850.0px;top:659px;width:1.0px;height:45px;background:#e2e2e2"></div>
<div class="abs" style="left:907.0px;top:659px;width:1.0px;height:45px;background:#e2e2e2"></div>
<div class="abs" style="left:1363.0px;top:659px;width:1.0px;height:45px;background:#e2e2e2"></div>
<div class="abs" style="left:1419.8px;top:659px;width:1.0px;height:45px;background:#e2e2e2"></div>
<div class="t" style="left:295.50px;top:666px;font-size:12.7px;line-height:14px;font-weight:700;color:#222;">7.12.2021</div>
<div class="t" style="left:295.50px;top:685px;font-size:11.8px;line-height:14px;font-weight:700;color:#777;transform:scaleY(1.12);transform-origin:0 11px;">Úterý</div>
<svg class="abs" style="left:405.5px;top:679px;" width="8.5" height="8" viewBox="0 0 8.5 8"><path d="M0.5 0.5 L8 7.5 M8 0.5 L0.5 7.5" stroke="#858585" stroke-width="1"/></svg>
<svg class="abs" style="left:419.5px;top:678.5px;" width="11" height="11" viewBox="0 0 11 11"><path d="M0.6 10.4 L1.3 7.2 L7.6 0.9 Q8.5 0 9.4 0.9 L10.1 1.6 Q11 2.5 10.1 3.4 L3.8 9.7 Z" fill="#7a7a7a"/><path d="M1.3 7.2 L3.8 9.7" stroke="#fff" stroke-width=".5"/></svg>
<svg class="abs" style="left:434.2px;top:677.7px;" width="12" height="12" viewBox="0 0 12 12"><g fill="none" stroke="#cfcfcf" stroke-width="1"><path d="M0.5 0.5 H6 L8.5 3 V11 H0.5 Z"/><path d="M2.5 5 H4 M2.5 7.5 H6 M5 9.5 L10.5 4" /></g></svg>
<div class="t" style="left:460.80px;top:675px;font-size:12px;line-height:14px;font-weight:400;color:#222;">07:00 -</div>
<div class="t" style="left:504.60px;top:675px;font-size:12px;line-height:14px;font-weight:400;color:#222;">15:30</div>
<div class="t" style="left:546.70px;top:675px;font-size:12px;line-height:14px;font-weight:400;color:#222;">Operační sál 1</div>
<div class="t" style="left:808.70px;top:675px;font-size:12.5px;line-height:14px;font-weight:400;color:#aaa;">1P</div>
<div class="t" style="right:1018.00px;text-align:right;top:666px;font-size:12px;line-height:14px;font-weight:700;color:#111;transform:scaleY(1.12);transform-origin:0 11px;">8</div>
<div class="t" style="right:504.40px;text-align:right;top:666px;font-size:12px;line-height:14px;font-weight:700;color:#111;transform:scaleY(1.12);transform-origin:0 11px;">0</div>
<div class="abs" style="left:291px;top:704px;width:1586px;height:45px;background:#fff"></div>
<div class="abs" style="left:291px;top:704px;width:1586px;height:1px;background:#e0e0e0"></div>
<div class="abs" style="left:393.5px;top:704px;width:1.0px;height:45px;background:#e2e2e2"></div>
<div class="abs" style="left:850.0px;top:704px;width:1.0px;height:45px;background:#e2e2e2"></div>
<div class="abs" style="left:907.0px;top:704px;width:1.0px;height:45px;background:#e2e2e2"></div>
<div class="abs" style="left:1363.0px;top:704px;width:1.0px;height:45px;background:#e2e2e2"></div>
<div class="abs" style="left:1419.8px;top:704px;width:1.0px;height:45px;background:#e2e2e2"></div>
<div class="t" style="left:295.50px;top:711px;font-size:12.7px;line-height:14px;font-weight:700;color:#222;">8.12.2021</div>
<div class="t" style="left:295.50px;top:730px;font-size:11.8px;line-height:14px;font-weight:700;color:#777;transform:scaleY(1.12);transform-origin:0 11px;">Středa</div>
<svg class="abs" style="left:405.5px;top:724px;" width="8.5" height="8" viewBox="0 0 8.5 8"><path d="M0.5 0.5 L8 7.5 M8 0.5 L0.5 7.5" stroke="#858585" stroke-width="1"/></svg>
<svg class="abs" style="left:419.5px;top:723.5px;" width="11" height="11" viewBox="0 0 11 11"><path d="M0.6 10.4 L1.3 7.2 L7.6 0.9 Q8.5 0 9.4 0.9 L10.1 1.6 Q11 2.5 10.1 3.4 L3.8 9.7 Z" fill="#7a7a7a"/><path d="M1.3 7.2 L3.8 9.7" stroke="#fff" stroke-width=".5"/></svg>
<svg class="abs" style="left:434.2px;top:722.7px;" width="12" height="12" viewBox="0 0 12 12"><g fill="none" stroke="#cfcfcf" stroke-width="1"><path d="M0.5 0.5 H6 L8.5 3 V11 H0.5 Z"/><path d="M2.5 5 H4 M2.5 7.5 H6 M5 9.5 L10.5 4" /></g></svg>
<div class="t" style="left:460.80px;top:720px;font-size:12px;line-height:14px;font-weight:400;color:#222;">07:00 -</div>
<div class="t" style="left:504.60px;top:720px;font-size:12px;line-height:14px;font-weight:400;color:#222;">15:30</div>
<div class="t" style="left:546.70px;top:720px;font-size:12px;line-height:14px;font-weight:400;color:#222;">Operační sál 1</div>
<div class="t" style="left:808.70px;top:720px;font-size:12.5px;line-height:14px;font-weight:400;color:#aaa;">1P</div>
<div class="t" style="right:1018.00px;text-align:right;top:711px;font-size:12px;line-height:14px;font-weight:700;color:#111;transform:scaleY(1.12);transform-origin:0 11px;">8</div>
<div class="t" style="right:504.40px;text-align:right;top:711px;font-size:12px;line-height:14px;font-weight:700;color:#111;transform:scaleY(1.12);transform-origin:0 11px;">0</div>
<div class="abs" style="left:291px;top:749px;width:1586px;height:45px;background:#fff"></div>
<div class="abs" style="left:291px;top:749px;width:1586px;height:1px;background:#e0e0e0"></div>
<div class="abs" style="left:393.5px;top:749px;width:1.0px;height:45px;background:#e2e2e2"></div>
<div class="abs" style="left:850.0px;top:749px;width:1.0px;height:45px;background:#e2e2e2"></div>
<div class="abs" style="left:907.0px;top:749px;width:1.0px;height:45px;background:#e2e2e2"></div>
<div class="abs" style="left:1363.0px;top:749px;width:1.0px;height:45px;background:#e2e2e2"></div>
<div class="abs" style="left:1419.8px;top:749px;width:1.0px;height:45px;background:#e2e2e2"></div>
<div class="t" style="left:295.50px;top:756px;font-size:12.7px;line-height:14px;font-weight:700;color:#222;">9.12.2021</div>
<div class="t" style="left:295.50px;top:775px;font-size:11.8px;line-height:14px;font-weight:700;color:#777;transform:scaleY(1.12);transform-origin:0 11px;">Čtvrtek</div>
<svg class="abs" style="left:405.5px;top:769px;" width="8.5" height="8" viewBox="0 0 8.5 8"><path d="M0.5 0.5 L8 7.5 M8 0.5 L0.5 7.5" stroke="#858585" stroke-width="1"/></svg>
<svg class="abs" style="left:419.5px;top:768.5px;" width="11" height="11" viewBox="0 0 11 11"><path d="M0.6 10.4 L1.3 7.2 L7.6 0.9 Q8.5 0 9.4 0.9 L10.1 1.6 Q11 2.5 10.1 3.4 L3.8 9.7 Z" fill="#7a7a7a"/><path d="M1.3 7.2 L3.8 9.7" stroke="#fff" stroke-width=".5"/></svg>
<svg class="abs" style="left:434.2px;top:767.7px;" width="12" height="12" viewBox="0 0 12 12"><g fill="none" stroke="#cfcfcf" stroke-width="1"><path d="M0.5 0.5 H6 L8.5 3 V11 H0.5 Z"/><path d="M2.5 5 H4 M2.5 7.5 H6 M5 9.5 L10.5 4" /></g></svg>
<div class="t" style="left:460.80px;top:765px;font-size:12px;line-height:14px;font-weight:400;color:#222;">07:00 -</div>
<div class="t" style="left:504.60px;top:765px;font-size:12px;line-height:14px;font-weight:400;color:#222;">15:30</div>
<div class="t" style="left:546.70px;top:765px;font-size:12px;line-height:14px;font-weight:400;color:#222;">Operační sál 1</div>
<div class="t" style="left:808.70px;top:765px;font-size:12.5px;line-height:14px;font-weight:400;color:#aaa;">1P</div>
<div class="t" style="right:1018.00px;text-align:right;top:756px;font-size:12px;line-height:14px;font-weight:700;color:#111;transform:scaleY(1.12);transform-origin:0 11px;">8</div>
<div class="t" style="right:504.40px;text-align:right;top:756px;font-size:12px;line-height:14px;font-weight:700;color:#111;transform:scaleY(1.12);transform-origin:0 11px;">0</div>
<div class="abs" style="left:291px;top:794px;width:1586px;height:45px;background:#fff"></div>
<div class="abs" style="left:291px;top:794px;width:1586px;height:1px;background:#e0e0e0"></div>
<div class="abs" style="left:393.5px;top:794px;width:1.0px;height:45px;background:#e2e2e2"></div>
<div class="abs" style="left:850.0px;top:794px;width:1.0px;height:45px;background:#e2e2e2"></div>
<div class="abs" style="left:907.0px;top:794px;width:1.0px;height:45px;background:#e2e2e2"></div>
<div class="abs" style="left:1363.0px;top:794px;width:1.0px;height:45px;background:#e2e2e2"></div>
<div class="abs" style="left:1419.8px;top:794px;width:1.0px;height:45px;background:#e2e2e2"></div>
<div class="t" style="left:295.50px;top:801px;font-size:12.7px;line-height:14px;font-weight:700;color:#222;">10.12.2021</div>
<div class="t" style="left:295.50px;top:820px;font-size:11.8px;line-height:14px;font-weight:700;color:#777;transform:scaleY(1.12);transform-origin:0 11px;">Pátek</div>
<svg class="abs" style="left:405.5px;top:814px;" width="8.5" height="8" viewBox="0 0 8.5 8"><path d="M0.5 0.5 L8 7.5 M8 0.5 L0.5 7.5" stroke="#858585" stroke-width="1"/></svg>
<svg class="abs" style="left:419.5px;top:813.5px;" width="11" height="11" viewBox="0 0 11 11"><path d="M0.6 10.4 L1.3 7.2 L7.6 0.9 Q8.5 0 9.4 0.9 L10.1 1.6 Q11 2.5 10.1 3.4 L3.8 9.7 Z" fill="#7a7a7a"/><path d="M1.3 7.2 L3.8 9.7" stroke="#fff" stroke-width=".5"/></svg>
<svg class="abs" style="left:434.2px;top:812.7px;" width="12" height="12" viewBox="0 0 12 12"><g fill="none" stroke="#cfcfcf" stroke-width="1"><path d="M0.5 0.5 H6 L8.5 3 V11 H0.5 Z"/><path d="M2.5 5 H4 M2.5 7.5 H6 M5 9.5 L10.5 4" /></g></svg>
<div class="t" style="left:460.80px;top:810px;font-size:12px;line-height:14px;font-weight:400;color:#222;">07:00 -</div>
<div class="t" style="left:504.60px;top:810px;font-size:12px;line-height:14px;font-weight:400;color:#222;">15:30</div>
<div class="t" style="left:546.70px;top:810px;font-size:12px;line-height:14px;font-weight:400;color:#222;">Operační sál 1</div>
<div class="t" style="left:808.70px;top:810px;font-size:12.5px;line-height:14px;font-weight:400;color:#aaa;">1P</div>
<div class="t" style="right:1018.00px;text-align:right;top:801px;font-size:12px;line-height:14px;font-weight:700;color:#111;transform:scaleY(1.12);transform-origin:0 11px;">8</div>
<div class="t" style="right:504.40px;text-align:right;top:801px;font-size:12px;line-height:14px;font-weight:700;color:#111;transform:scaleY(1.12);transform-origin:0 11px;">0</div>
<div class="abs" style="left:291px;top:839px;width:1586px;height:45px;background:#efefef"></div>
<div class="abs" style="left:291px;top:839px;width:1586px;height:1px;background:#e0e0e0"></div>
<div class="abs" style="left:393.5px;top:839px;width:1.0px;height:45px;background:#e2e2e2"></div>
<div class="abs" style="left:850.0px;top:839px;width:1.0px;height:45px;background:#e2e2e2"></div>
<div class="abs" style="left:907.0px;top:839px;width:1.0px;height:45px;background:#e2e2e2"></div>
<div class="abs" style="left:1363.0px;top:839px;width:1.0px;height:45px;background:#e2e2e2"></div>
<div class="abs" style="left:1419.8px;top:839px;width:1.0px;height:45px;background:#e2e2e2"></div>
<div class="t" style="left:295.50px;top:846px;font-size:12.7px;line-height:14px;font-weight:700;color:#222;">11.12.2021</div>
<div class="t" style="left:295.50px;top:865px;font-size:11.8px;line-height:14px;font-weight:700;color:#777;transform:scaleY(1.12);transform-origin:0 11px;">Sobota</div>
<div class="t" style="right:1018.00px;text-align:right;top:846px;font-size:12px;line-height:14px;font-weight:700;color:#111;transform:scaleY(1.12);transform-origin:0 11px;">0</div>
<div class="t" style="right:504.40px;text-align:right;top:846px;font-size:12px;line-height:14px;font-weight:700;color:#111;transform:scaleY(1.12);transform-origin:0 11px;">0</div>
<div class="abs" style="left:291px;top:884px;width:1586px;height:45px;background:#efefef"></div>
<div class="abs" style="left:291px;top:884px;width:1586px;height:1px;background:#e0e0e0"></div>
<div class="abs" style="left:393.5px;top:884px;width:1.0px;height:45px;background:#e2e2e2"></div>
<div class="abs" style="left:850.0px;top:884px;width:1.0px;height:45px;background:#e2e2e2"></div>
<div class="abs" style="left:907.0px;top:884px;width:1.0px;height:45px;background:#e2e2e2"></div>
<div class="abs" style="left:1363.0px;top:884px;width:1.0px;height:45px;background:#e2e2e2"></div>
<div class="abs" style="left:1419.8px;top:884px;width:1.0px;height:45px;background:#e2e2e2"></div>
<div class="t" style="left:295.50px;top:891px;font-size:12.7px;line-height:14px;font-weight:700;color:#222;">12.12.2021</div>
<div class="t" style="left:295.50px;top:910px;font-size:11.8px;line-height:14px;font-weight:700;color:#777;transform:scaleY(1.12);transform-origin:0 11px;">Neděle</div>
<div class="t" style="right:1018.00px;text-align:right;top:891px;font-size:12px;line-height:14px;font-weight:700;color:#111;transform:scaleY(1.12);transform-origin:0 11px;">0</div>
<div class="t" style="right:504.40px;text-align:right;top:891px;font-size:12px;line-height:14px;font-weight:700;color:#111;transform:scaleY(1.12);transform-origin:0 11px;">0</div>
<div class="abs" style="left:291px;top:929px;width:1586px;height:45px;background:#fff"></div>
<div class="abs" style="left:291px;top:929px;width:1586px;height:1px;background:#e0e0e0"></div>
<div class="abs" style="left:393.5px;top:929px;width:1.0px;height:45px;background:#e2e2e2"></div>
<div class="abs" style="left:850.0px;top:929px;width:1.0px;height:45px;background:#e2e2e2"></div>
<div class="abs" style="left:907.0px;top:929px;width:1.0px;height:45px;background:#e2e2e2"></div>
<div class="abs" style="left:1363.0px;top:929px;width:1.0px;height:45px;background:#e2e2e2"></div>
<div class="abs" style="left:1419.8px;top:929px;width:1.0px;height:45px;background:#e2e2e2"></div>
<div class="t" style="left:295.50px;top:936px;font-size:12.7px;line-height:14px;font-weight:700;color:#222;">13.12.2021</div>
<div class="t" style="left:295.50px;top:955px;font-size:11.8px;line-height:14px;font-weight:700;color:#777;transform:scaleY(1.12);transform-origin:0 11px;">Pondělí</div>
<svg class="abs" style="left:405.5px;top:949px;" width="8.5" height="8" viewBox="0 0 8.5 8"><path d="M0.5 0.5 L8 7.5 M8 0.5 L0.5 7.5" stroke="#858585" stroke-width="1"/></svg>
<svg class="abs" style="left:419.5px;top:948.5px;" width="11" height="11" viewBox="0 0 11 11"><path d="M0.6 10.4 L1.3 7.2 L7.6 0.9 Q8.5 0 9.4 0.9 L10.1 1.6 Q11 2.5 10.1 3.4 L3.8 9.7 Z" fill="#7a7a7a"/><path d="M1.3 7.2 L3.8 9.7" stroke="#fff" stroke-width=".5"/></svg>
<svg class="abs" style="left:434.2px;top:947.7px;" width="12" height="12" viewBox="0 0 12 12"><g fill="none" stroke="#cfcfcf" stroke-width="1"><path d="M0.5 0.5 H6 L8.5 3 V11 H0.5 Z"/><path d="M2.5 5 H4 M2.5 7.5 H6 M5 9.5 L10.5 4" /></g></svg>
<div class="t" style="left:460.80px;top:945px;font-size:12px;line-height:14px;font-weight:400;color:#222;">07:00 -</div>
<div class="t" style="left:504.60px;top:945px;font-size:12px;line-height:14px;font-weight:400;color:#222;">15:30</div>
<div class="t" style="left:546.70px;top:945px;font-size:12px;line-height:14px;font-weight:400;color:#222;">Operační sál 1</div>
<div class="t" style="left:808.70px;top:945px;font-size:12.5px;line-height:14px;font-weight:400;color:#aaa;">1P</div>
<div class="t" style="right:1018.00px;text-align:right;top:936px;font-size:12px;line-height:14px;font-weight:700;color:#111;transform:scaleY(1.12);transform-origin:0 11px;">8</div>
<div class="t" style="right:504.40px;text-align:right;top:936px;font-size:12px;line-height:14px;font-weight:700;color:#111;transform:scaleY(1.12);transform-origin:0 11px;">0</div>
<div class="abs" style="left:291px;top:974px;width:1586px;height:45px;background:#fff"></div>
<div class="abs" style="left:291px;top:974px;width:1586px;height:1px;background:#e0e0e0"></div>
<div class="abs" style="left:393.5px;top:974px;width:1.0px;height:45px;background:#e2e2e2"></div>
<div class="abs" style="left:850.0px;top:974px;width:1.0px;height:45px;background:#e2e2e2"></div>
<div class="abs" style="left:907.0px;top:974px;width:1.0px;height:45px;background:#e2e2e2"></div>
<div class="abs" style="left:1363.0px;top:974px;width:1.0px;height:45px;background:#e2e2e2"></div>
<div class="abs" style="left:1419.8px;top:974px;width:1.0px;height:45px;background:#e2e2e2"></div>
<div class="t" style="left:295.50px;top:981px;font-size:12.7px;line-height:14px;font-weight:700;color:#222;">14.12.2021</div>
<div class="t" style="left:295.50px;top:1000px;font-size:11.8px;line-height:14px;font-weight:700;color:#777;transform:scaleY(1.12);transform-origin:0 11px;">Úterý</div>
<svg class="abs" style="left:405.5px;top:994px;" width="8.5" height="8" viewBox="0 0 8.5 8"><path d="M0.5 0.5 L8 7.5 M8 0.5 L0.5 7.5" stroke="#858585" stroke-width="1"/></svg>
<svg class="abs" style="left:419.5px;top:993.5px;" width="11" height="11" viewBox="0 0 11 11"><path d="M0.6 10.4 L1.3 7.2 L7.6 0.9 Q8.5 0 9.4 0.9 L10.1 1.6 Q11 2.5 10.1 3.4 L3.8 9.7 Z" fill="#7a7a7a"/><path d="M1.3 7.2 L3.8 9.7" stroke="#fff" stroke-width=".5"/></svg>
<svg class="abs" style="left:434.2px;top:992.7px;" width="12" height="12" viewBox="0 0 12 12"><g fill="none" stroke="#cfcfcf" stroke-width="1"><path d="M0.5 0.5 H6 L8.5 3 V11 H0.5 Z"/><path d="M2.5 5 H4 M2.5 7.5 H6 M5 9.5 L10.5 4" /></g></svg>
<div class="t" style="left:460.80px;top:990px;font-size:12px;line-height:14px;font-weight:400;color:#222;">07:00 -</div>
<div class="t" style="left:504.60px;top:990px;font-size:12px;line-height:14px;font-weight:400;color:#222;">15:30</div>
<div class="t" style="left:546.70px;top:990px;font-size:12px;line-height:14px;font-weight:400;color:#222;">Operační sál 1</div>
<div class="t" style="left:808.70px;top:990px;font-size:12.5px;line-height:14px;font-weight:400;color:#aaa;">1P</div>
<div class="t" style="right:1018.00px;text-align:right;top:981px;font-size:12px;line-height:14px;font-weight:700;color:#111;transform:scaleY(1.12);transform-origin:0 11px;">8</div>
<div class="t" style="right:504.40px;text-align:right;top:981px;font-size:12px;line-height:14px;font-weight:700;color:#111;transform:scaleY(1.12);transform-origin:0 11px;">0</div>
<div class="abs" style="left:291px;top:1019px;width:1586px;height:45px;background:#fff"></div>
<div class="abs" style="left:291px;top:1019px;width:1586px;height:1px;background:#e0e0e0"></div>
<div class="abs" style="left:393.5px;top:1019px;width:1.0px;height:45px;background:#e2e2e2"></div>
<div class="abs" style="left:850.0px;top:1019px;width:1.0px;height:45px;background:#e2e2e2"></div>
<div class="abs" style="left:907.0px;top:1019px;width:1.0px;height:45px;background:#e2e2e2"></div>
<div class="abs" style="left:1363.0px;top:1019px;width:1.0px;height:45px;background:#e2e2e2"></div>
<div class="abs" style="left:1419.8px;top:1019px;width:1.0px;height:45px;background:#e2e2e2"></div>
<div class="t" style="left:295.50px;top:1026px;font-size:12.7px;line-height:14px;font-weight:700;color:#222;">15.12.2021</div>
<div class="t" style="left:295.50px;top:1045px;font-size:11.8px;line-height:14px;font-weight:700;color:#777;transform:scaleY(1.12);transform-origin:0 11px;">Středa</div>
<svg class="abs" style="left:405.5px;top:1039px;" width="8.5" height="8" viewBox="0 0 8.5 8"><path d="M0.5 0.5 L8 7.5 M8 0.5 L0.5 7.5" stroke="#858585" stroke-width="1"/></svg>
<svg class="abs" style="left:419.5px;top:1038.5px;" width="11" height="11" viewBox="0 0 11 11"><path d="M0.6 10.4 L1.3 7.2 L7.6 0.9 Q8.5 0 9.4 0.9 L10.1 1.6 Q11 2.5 10.1 3.4 L3.8 9.7 Z" fill="#7a7a7a"/><path d="M1.3 7.2 L3.8 9.7" stroke="#fff" stroke-width=".5"/></svg>
<svg class="abs" style="left:434.2px;top:1037.7px;" width="12" height="12" viewBox="0 0 12 12"><g fill="none" stroke="#cfcfcf" stroke-width="1"><path d="M0.5 0.5 H6 L8.5 3 V11 H0.5 Z"/><path d="M2.5 5 H4 M2.5 7.5 H6 M5 9.5 L10.5 4" /></g></svg>
<div class="t" style="left:460.80px;top:1035px;font-size:12px;line-height:14px;font-weight:400;color:#222;">07:00 -</div>
<div class="t" style="left:504.60px;top:1035px;font-size:12px;line-height:14px;font-weight:400;color:#222;">15:30</div>
<div class="t" style="left:546.70px;top:1035px;font-size:12px;line-height:14px;font-weight:400;color:#222;">Operační sál 1</div>
<div class="t" style="left:808.70px;top:1035px;font-size:12.5px;line-height:14px;font-weight:400;color:#aaa;">1P</div>
<div class="t" style="right:1018.00px;text-align:right;top:1026px;font-size:12px;line-height:14px;font-weight:700;color:#111;transform:scaleY(1.12);transform-origin:0 11px;">8</div>
<div class="t" style="right:504.40px;text-align:right;top:1026px;font-size:12px;line-height:14px;font-weight:700;color:#111;transform:scaleY(1.12);transform-origin:0 11px;">0</div>
<div class="abs" style="left:291px;top:1064px;width:1586px;height:45px;background:#fff"></div>
<div class="abs" style="left:291px;top:1064px;width:1586px;height:1px;background:#e0e0e0"></div>
<div class="abs" style="left:393.5px;top:1064px;width:1.0px;height:45px;background:#e2e2e2"></div>
<div class="abs" style="left:850.0px;top:1064px;width:1.0px;height:45px;background:#e2e2e2"></div>
<div class="abs" style="left:907.0px;top:1064px;width:1.0px;height:45px;background:#e2e2e2"></div>
<div class="abs" style="left:1363.0px;top:1064px;width:1.0px;height:45px;background:#e2e2e2"></div>
<div class="abs" style="left:1419.8px;top:1064px;width:1.0px;height:45px;background:#e2e2e2"></div>
<div class="t" style="left:295.50px;top:1071px;font-size:12.7px;line-height:14px;font-weight:700;color:#222;">16.12.2021</div>
<div class="t" style="left:295.50px;top:1090px;font-size:11.8px;line-height:14px;font-weight:700;color:#777;transform:scaleY(1.12);transform-origin:0 11px;">Čtvrtek</div>
<svg class="abs" style="left:405.5px;top:1084px;" width="8.5" height="8" viewBox="0 0 8.5 8"><path d="M0.5 0.5 L8 7.5 M8 0.5 L0.5 7.5" stroke="#858585" stroke-width="1"/></svg>
<svg class="abs" style="left:419.5px;top:1083.5px;" width="11" height="11" viewBox="0 0 11 11"><path d="M0.6 10.4 L1.3 7.2 L7.6 0.9 Q8.5 0 9.4 0.9 L10.1 1.6 Q11 2.5 10.1 3.4 L3.8 9.7 Z" fill="#7a7a7a"/><path d="M1.3 7.2 L3.8 9.7" stroke="#fff" stroke-width=".5"/></svg>
<svg class="abs" style="left:434.2px;top:1082.7px;" width="12" height="12" viewBox="0 0 12 12"><g fill="none" stroke="#cfcfcf" stroke-width="1"><path d="M0.5 0.5 H6 L8.5 3 V11 H0.5 Z"/><path d="M2.5 5 H4 M2.5 7.5 H6 M5 9.5 L10.5 4" /></g></svg>
<div class="t" style="left:460.80px;top:1080px;font-size:12px;line-height:14px;font-weight:400;color:#222;">07:00 -</div>
<div class="t" style="left:504.60px;top:1080px;font-size:12px;line-height:14px;font-weight:400;color:#222;">15:30</div>
<div class="t" style="left:546.70px;top:1080px;font-size:12px;line-height:14px;font-weight:400;color:#222;">Operační sál 1</div>
<div class="t" style="left:808.70px;top:1080px;font-size:12.5px;line-height:14px;font-weight:400;color:#aaa;">1P</div>
<div class="t" style="right:1018.00px;text-align:right;top:1071px;font-size:12px;line-height:14px;font-weight:700;color:#111;transform:scaleY(1.12);transform-origin:0 11px;">8</div>
<div class="t" style="right:504.40px;text-align:right;top:1071px;font-size:12px;line-height:14px;font-weight:700;color:#111;transform:scaleY(1.12);transform-origin:0 11px;">0</div>
<div class="abs" style="left:262px;top:1067px;width:1645px;height:13px;background:#f1f1f1"></div>
<div class="abs" style="left:265px;top:1070px;width:0;height:0;border-top:3.5px solid transparent;border-bottom:3.5px solid transparent;border-right:4px solid #a3a3a3"></div>
<div class="abs" style="left:1899.5px;top:1070.5px;width:0;height:0;border-top:3px solid transparent;border-bottom:3px solid transparent;border-left:3.5px solid #a3a3a3"></div>
<div class="abs" style="left:595.3px;top:172px;width:381.20000000000005px;height:207px;background:#b3b3b3;border:2px solid #8e8e8e;border-top-color:#9a9a9a"></div>
<div class="abs" style="left:599px;top:176px;width:374px;height:33px;background:#263545;border-radius:5px"></div>
<div class="t" style="left:604.30px;top:186px;font-size:10px;line-height:11px;font-weight:700;color:#fff;transform:scaleY(1.12);transform-origin:0 9px;">Filtrovat:</div>
<div class="abs" style="left:660px;top:181.4px;width:98px;height:18.599999999999994px;background:#d4d4d4"></div>
<div class="t" style="left:662.60px;top:185px;font-size:10.4px;line-height:11px;font-weight:400;color:#9a9a9a;">Vyhledávání</div>
<svg class="abs" style="left:770px;top:186px;" width="11" height="9" viewBox="0 0 11 9"><path d="M1 4.5 L4 7.5 L10 1" fill="none" stroke="#f3d774" stroke-width="2"/></svg>
<div class="t" style="left:788.00px;top:184px;font-size:11.8px;line-height:14px;font-weight:700;color:#fff;transform:scaleY(1.12);transform-origin:0 11px;">Vybrat vše</div>
<svg class="abs" style="left:860px;top:186px;" width="9" height="9" viewBox="0 0 9 9"><path d="M1 1 L8 8 M8 1 L1 8" stroke="#f3d774" stroke-width="2.2"/></svg>
<div class="t" style="left:876.30px;top:184px;font-size:11.8px;line-height:14px;font-weight:700;color:#fff;transform:scaleY(1.12);transform-origin:0 11px;">Zrušit výběr</div>
<svg class="abs" style="left:955px;top:184.7px;" width="12" height="12" viewBox="0 0 12 12"><circle cx="6" cy="6" r="6" fill="#f3d774"/><path d="M3.5 3.5 L8.5 8.5 M8.5 3.5 L3.5 8.5" stroke="#263545" stroke-width="1.6"/></svg>
<div class="t" style="left:606.50px;top:222px;font-size:11.8px;line-height:14px;font-weight:700;color:#444;transform:scaleY(1.12);transform-origin:0 11px;">Aš</div>
<div class="abs" style="left:598.6px;top:243.5px;width:362.1px;height:1.5px;background:#999"></div>
<div class="abs" style="left:598.6px;top:275.5px;width:362.1px;height:1.5px;background:#999"></div>
<div class="abs" style="left:598.6px;top:306.5px;width:362.1px;height:1.5px;background:#999"></div>
<div class="abs" style="left:598.6px;top:340.0px;width:362.1px;height:1.5px;background:#999"></div>
<div class="abs" style="left:598.6px;top:370.5px;width:362.1px;height:1.5px;background:#999"></div>
<div class="abs" style="left:604.5px;top:255.2px;width:11.5px;height:11.5px;background:#1a73e8;border-radius:2px"></div>
<svg class="abs" style="left:604.5px;top:255.2px;" width="11.5" height="11.5" viewBox="0 0 11.5 11.5"><path d="M2.5 6 L4.8 8.3 L9.2 3.3" fill="none" stroke="#fff" stroke-width="1.6"/></svg>
<div class="t" style="left:626.00px;top:255px;font-size:12.3px;line-height:14px;font-weight:400;color:#f2f03c;">Bezbolestná Chirurgie</div>
<div class="abs" style="left:604.5px;top:286px;width:11.5px;height:11.5px;background:#1a73e8;border-radius:2px"></div>
<svg class="abs" style="left:604.5px;top:286px;" width="11.5" height="11.5" viewBox="0 0 11.5 11.5"><path d="M2.5 6 L4.8 8.3 L9.2 3.3" fill="none" stroke="#fff" stroke-width="1.6"/></svg>
<div class="t" style="left:626.00px;top:286px;font-size:12.2px;line-height:14px;font-weight:400;color:#222;">Pěkná Interna</div>
<div class="t" style="left:606.70px;top:318px;font-size:11.6px;line-height:12px;font-weight:700;color:#444;transform:scaleY(1.12);transform-origin:0 10px;">Chirurgie Omega</div>
<div class="abs" style="left:604.5px;top:350px;width:11.5px;height:11.5px;background:#1a73e8;border-radius:2px"></div>
<svg class="abs" style="left:604.5px;top:350px;" width="11.5" height="11.5" viewBox="0 0 11.5 11.5"><path d="M2.5 6 L4.8 8.3 L9.2 3.3" fill="none" stroke="#fff" stroke-width="1.6"/></svg>
<div class="t" style="left:626.00px;top:350px;font-size:12.25px;line-height:14px;font-weight:400;color:#222;">Ambulance 1</div>
<div class="abs" style="left:961px;top:212px;width:12px;height:163.5px;background:#f0f0f0"></div>
<div class="abs" style="left:962.5px;top:225px;width:9.5px;height:38px;background:#c1c1c1"></div>
<div class="abs" style="left:964px;top:216.5px;width:0;height:0;border-left:3px solid transparent;border-right:3px solid transparent;border-bottom:3px solid #a3a3a3"></div>
<div class="abs" style="left:964px;top:367px;width:0;height:0;border-left:3.5px solid transparent;border-right:3.5px solid transparent;border-top:3.5px solid #505050"></div>
<div class="abs" style="left:1187px;top:176.3px;width:27px;height:18.399999999999977px;background:#fff;border:1px solid #555;box-shadow:1px 1px 2px rgba(0,0,0,.3)"></div>
<div class="t" style="left:1194.50px;top:182px;font-size:8.3px;line-height:10px;font-weight:400;color:#555;">Filtr</div>
<svg class="abs" style="left:0px;top:0px;pointer-events:none" width="1920" height="1080" viewBox="0 0 1920 1080"><line x1="202.7" y1="386" x2="404" y2="596" stroke="#000" stroke-width="2"/></svg>
<div class="abs" style="left:403px;top:595px;width:396px;height:195px;background:rgba(255,195,0,.82);border:2px solid #000"></div>
<div class="t" style="left:301.50px;width:600px;text-align:center;top:612px;font-size:30.5px;line-height:34px;font-weight:400;color:#000;letter-spacing:0.9px">Dle filtru pracovišť se</div>
<div class="t" style="left:301.50px;width:600px;text-align:center;top:656px;font-size:30.5px;line-height:34px;font-weight:400;color:#000;letter-spacing:0.9px">zobrazují pracovníci</div>
<div class="t" style="left:301.50px;width:600px;text-align:center;top:698px;font-size:30.5px;line-height:34px;font-weight:400;color:#000;letter-spacing:0.9px">přiřazení k jednotlivých</div>
<div class="t" style="left:301.50px;width:600px;text-align:center;top:742px;font-size:30.5px;line-height:34px;font-weight:400;color:#000;letter-spacing:0.9px">pracovištím</div>
</body></html>
